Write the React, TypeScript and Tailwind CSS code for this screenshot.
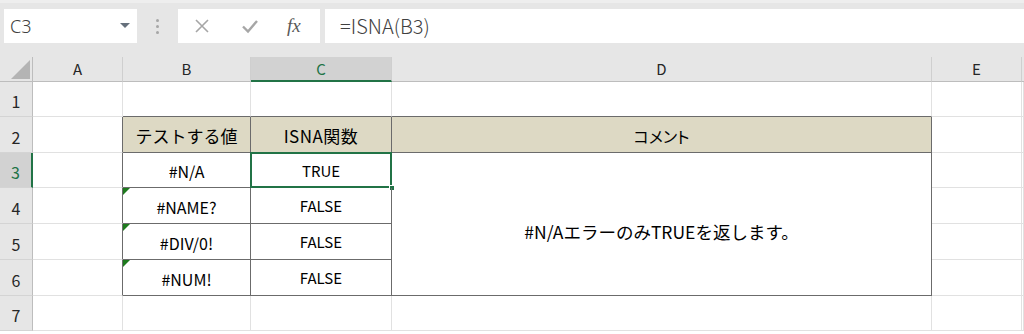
import React from 'react';

const GRID = 'border-[#e1e1e1]';
const TB = 'border-[#6b6b6b]';

type CellProps = {
  children?: React.ReactNode;
  className?: string;
};

function Cell({ children, className = '' }: CellProps) {
  return (
    <div className={`relative flex items-center justify-center border-r border-b ${className}`}>
      {children}
    </div>
  );
}

function ColHead({ label, active = false, last = false }: { label: string; active?: boolean; last?: boolean }) {
  return (
    <div
      className={`flex items-center justify-center pt-[1px] text-[15px] ${
        last ? '' : 'border-r border-[#cfcfcf]'
      } ${
        active
          ? 'bg-[#d2d2d2] text-[#217346] border-b-2 border-b-[#217346]'
          : 'bg-[#e6e6e6] text-[#262626] border-b border-b-[#bdbdbd]'
      }`}
    >
      {label}
    </div>
  );
}

function RowHead({ n, active = false }: { n: number; active?: boolean }) {
  return (
    <div
      className={`flex items-end justify-center pb-[3px] text-[16px] border-b border-[#d4d4d4] ${
        active
          ? 'bg-[#d2d2d2] text-[#217346] border-r-2 border-r-[#217346]'
          : 'bg-[#e6e6e6] text-[#262626] border-r border-r-[#bdbdbd]'
      }`}
    >
      {n}
    </div>
  );
}

function Flag() {
  return (
    <div className="absolute left-0 top-0 w-0 h-0 border-t-[7px] border-t-[#1e7a1e] border-r-[7px] border-r-transparent" />
  );
}

export default function App() {
  const jp = { fontFamily: '"Noto Sans CJK JP", "Noto Sans", sans-serif' };

  const rows = [
    { n: 4, v: '#NAME?', r: 'FALSE' },
    { n: 5, v: '#DIV/0!', r: 'FALSE' },
    { n: 6, v: '#NUM!', r: 'FALSE' },
  ];

  return (
    <div className="w-[1024px] h-[334px] overflow-hidden bg-white" style={{ fontFamily: '"Noto Sans", "Noto Sans CJK JP", sans-serif' }}>
      {/* toolbar */}
      <div className="h-[57px] bg-[#e6e6e6] border-t-[3px] border-t-[#eeeeee] pt-[6px] flex items-start">
        <div className="ml-[4px] w-[133px] h-[34px] bg-white flex items-center justify-between pl-[6px] pr-[7px]">
          <span className="text-[18px] font-light text-[#404040]">C3</span>
          <div className="w-0 h-0 border-l-[5px] border-l-transparent border-r-[5px] border-r-transparent border-t-[5px] border-t-[#66707c] mb-[2px]" />
        </div>
        <div className="w-[41px] h-[34px] flex flex-col items-center justify-center gap-[3px]">
          <div className="w-[3px] h-[3px] rounded-full bg-[#a6a6a6]" />
          <div className="w-[3px] h-[3px] rounded-full bg-[#a6a6a6]" />
          <div className="w-[3px] h-[3px] rounded-full bg-[#a6a6a6]" />
        </div>
        <div className="w-[142px] h-[34px] bg-white flex items-center">
          <svg width="16" height="16" viewBox="0 0 16 16" className="ml-[16px]">
            <path d="M2 2 L14 14 M14 2 L2 14" stroke="#a6a6a6" strokeWidth="1.6" fill="none" />
          </svg>
          <svg width="18" height="16" viewBox="0 0 18 16" className="ml-[31px]">
            <path d="M2 8.5 L7 13.5 L16 3" stroke="#a6a6a6" strokeWidth="2.4" fill="none" />
          </svg>
          <span className="ml-[28px] text-[19px] italic text-[#595959]" style={{ fontFamily: '"Liberation Serif", "DejaVu Serif", serif' }}>
            fx
          </span>
        </div>
        <div className="ml-[5px] flex-1 h-[34px] bg-white flex items-center pl-[15px]">
          <span className="text-[20px] font-light text-[#404040]" style={jp}>=ISNA(B3)</span>
        </div>
      </div>

      {/* sheet */}
      <div
        className="grid grid-cols-[33px_90px_128px_141px_540px_90px_2px] grid-rows-[25px_35px_36px_35px_36px_36px_36px_35px]"
        style={jp}
      >
        {/* header */}
        <div className="bg-[#e6e6e6] border-r border-r-[#bdbdbd] border-b border-b-[#bdbdbd] flex items-end justify-end pr-[2px] pb-[2px]">
          <div className="w-0 h-0 border-l-[19px] border-l-transparent border-b-[19px] border-b-[#b4b4b4]" />
        </div>
        <ColHead label="A" />
        <ColHead label="B" />
        <ColHead label="C" active />
        <ColHead label="D" />
        <ColHead label="E" />
        <ColHead label="" last />

        {/* row 1 */}
        <RowHead n={1} />
        <Cell className={GRID} />
        <Cell className={`${GRID} border-b-[#6b6b6b]`} />
        <Cell className={`${GRID} border-b-[#6b6b6b]`} />
        <Cell className={`${GRID} border-b-[#6b6b6b]`} />
        <Cell className={GRID} />
        <Cell className={GRID} />

        {/* row 2 */}
        <RowHead n={2} />
        <Cell className={`${GRID} border-r-[#6b6b6b]`} />
        <Cell className={`${TB} bg-[#ddd9c4] text-[17px] text-black pt-[2px]`}>テストする値</Cell>
        <Cell className={`${TB} bg-[#ddd9c4] text-[17px] text-black pt-[2px]`}>
          <span className="tracking-[0.5px]">ISNA関数</span>
        </Cell>
        <Cell className={`${TB} bg-[#ddd9c4] text-[16px] text-black pt-[2px] [font-feature-settings:'palt']`}>コメント</Cell>
        <Cell className={GRID} />
        <Cell className={GRID} />

        {/* row 3 */}
        <RowHead n={3} active />
        <Cell className={`${GRID} border-r-[#6b6b6b]`} />
        <Cell className={`${TB} text-[16px] text-black pt-[2px]`}>#N/A</Cell>
        <Cell className={`${TB} text-[15px] text-black pt-[2px]`}>
          TRUE
          <div className="absolute -left-[1px] -top-[1px] -right-[1px] -bottom-[1px] border-2 border-[#217346]" />
          <div className="absolute -right-[4px] -bottom-[4px] w-[6px] h-[6px] bg-[#217346] border border-white" />
        </Cell>
        <Cell className={`${TB} row-span-4 text-[17.5px] text-black pt-[16px]`}>
          #N/AエラーのみTRUEを返します。
        </Cell>
        <Cell className={GRID} />
        <Cell className={GRID} />

        {rows.map((row) => (
          <React.Fragment key={row.n}>
            <RowHead n={row.n} />
            <Cell className={`${GRID} border-r-[#6b6b6b]`} />
            <Cell className={`${TB} text-[16px] text-black pt-[2px]`}>
              <Flag />
              {row.v}
            </Cell>
            <Cell className={`${TB} text-[15px] text-black pt-[2px]`}>{row.r}</Cell>
            <Cell className={GRID} />
            <Cell className={GRID} />
          </React.Fragment>
        ))}

        {/* row 7 */}
        <RowHead n={7} />
        <Cell className={GRID} />
        <Cell className={GRID} />
        <Cell className={GRID} />
        <Cell className={GRID} />
        <Cell className={GRID} />
        <Cell className={GRID} />
      </div>
    </div>
  );
}
